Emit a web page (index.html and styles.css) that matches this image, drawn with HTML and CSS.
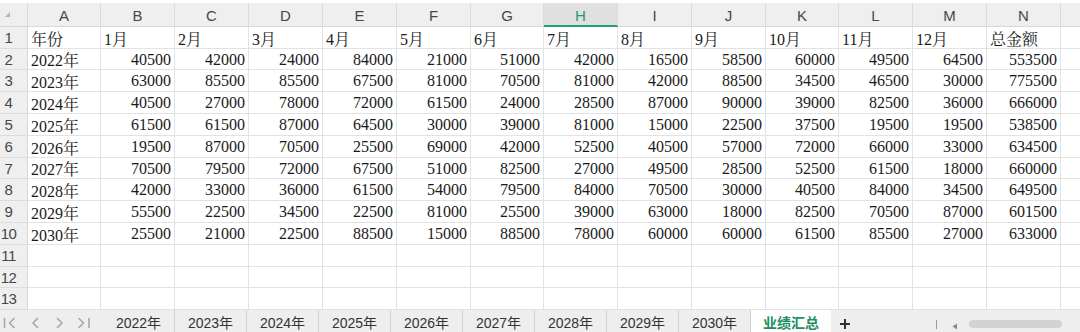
FILE: index.html
```html
<!DOCTYPE html>
<html lang="zh">
<head>
<meta charset="utf-8">
<title>业绩汇总</title>
<link rel="stylesheet" href="styles.css">
</head>
<body>
<div class="sheet">
  <div class="grid">
    <div class="corner"><svg width="28" height="24" viewBox="0 0 28 24"><polygon points="10,9 10,14 5,14" fill="#b5b5b5"/></svg></div>
    <div class="ch">A</div><div class="ch">B</div><div class="ch">C</div><div class="ch">D</div><div class="ch">E</div><div class="ch">F</div><div class="ch">G</div><div class="ch sel">H</div><div class="ch">I</div><div class="ch">J</div><div class="ch">K</div><div class="ch">L</div><div class="ch">M</div><div class="ch">N</div><div class="ch last"></div>

    <div class="rh">1</div><div class="c">年份</div><div class="c">1月</div><div class="c">2月</div><div class="c">3月</div><div class="c">4月</div><div class="c">5月</div><div class="c">6月</div><div class="c">7月</div><div class="c">8月</div><div class="c">9月</div><div class="c">10月</div><div class="c">11月</div><div class="c">12月</div><div class="c">总金额</div><div class="c last"></div>

    <div class="rh">2</div><div class="c">2022年</div><div class="c n">40500</div><div class="c n">42000</div><div class="c n">24000</div><div class="c n">84000</div><div class="c n">21000</div><div class="c n">51000</div><div class="c n">42000</div><div class="c n">16500</div><div class="c n">58500</div><div class="c n">60000</div><div class="c n">49500</div><div class="c n">64500</div><div class="c n">553500</div><div class="c last"></div>

    <div class="rh">3</div><div class="c">2023年</div><div class="c n">63000</div><div class="c n">85500</div><div class="c n">85500</div><div class="c n">67500</div><div class="c n">81000</div><div class="c n">70500</div><div class="c n">81000</div><div class="c n">42000</div><div class="c n">88500</div><div class="c n">34500</div><div class="c n">46500</div><div class="c n">30000</div><div class="c n">775500</div><div class="c last"></div>

    <div class="rh">4</div><div class="c">2024年</div><div class="c n">40500</div><div class="c n">27000</div><div class="c n">78000</div><div class="c n">72000</div><div class="c n">61500</div><div class="c n">24000</div><div class="c n">28500</div><div class="c n">87000</div><div class="c n">90000</div><div class="c n">39000</div><div class="c n">82500</div><div class="c n">36000</div><div class="c n">666000</div><div class="c last"></div>

    <div class="rh">5</div><div class="c">2025年</div><div class="c n">61500</div><div class="c n">61500</div><div class="c n">87000</div><div class="c n">64500</div><div class="c n">30000</div><div class="c n">39000</div><div class="c n">81000</div><div class="c n">15000</div><div class="c n">22500</div><div class="c n">37500</div><div class="c n">19500</div><div class="c n">19500</div><div class="c n">538500</div><div class="c last"></div>

    <div class="rh">6</div><div class="c">2026年</div><div class="c n">19500</div><div class="c n">87000</div><div class="c n">70500</div><div class="c n">25500</div><div class="c n">69000</div><div class="c n">42000</div><div class="c n">52500</div><div class="c n">40500</div><div class="c n">57000</div><div class="c n">72000</div><div class="c n">66000</div><div class="c n">33000</div><div class="c n">634500</div><div class="c last"></div>

    <div class="rh">7</div><div class="c">2027年</div><div class="c n">70500</div><div class="c n">79500</div><div class="c n">72000</div><div class="c n">67500</div><div class="c n">51000</div><div class="c n">82500</div><div class="c n">27000</div><div class="c n">49500</div><div class="c n">28500</div><div class="c n">52500</div><div class="c n">61500</div><div class="c n">18000</div><div class="c n">660000</div><div class="c last"></div>

    <div class="rh">8</div><div class="c">2028年</div><div class="c n">42000</div><div class="c n">33000</div><div class="c n">36000</div><div class="c n">61500</div><div class="c n">54000</div><div class="c n">79500</div><div class="c n">84000</div><div class="c n">70500</div><div class="c n">30000</div><div class="c n">40500</div><div class="c n">84000</div><div class="c n">34500</div><div class="c n">649500</div><div class="c last"></div>

    <div class="rh">9</div><div class="c">2029年</div><div class="c n">55500</div><div class="c n">22500</div><div class="c n">34500</div><div class="c n">22500</div><div class="c n">81000</div><div class="c n">25500</div><div class="c n">39000</div><div class="c n">63000</div><div class="c n">18000</div><div class="c n">82500</div><div class="c n">70500</div><div class="c n">87000</div><div class="c n">601500</div><div class="c last"></div>

    <div class="rh">10</div><div class="c">2030年</div><div class="c n">25500</div><div class="c n">21000</div><div class="c n">22500</div><div class="c n">88500</div><div class="c n">15000</div><div class="c n">88500</div><div class="c n">78000</div><div class="c n">60000</div><div class="c n">60000</div><div class="c n">61500</div><div class="c n">85500</div><div class="c n">27000</div><div class="c n">633000</div><div class="c last"></div>

    <div class="rh">11</div><div class="c"></div><div class="c"></div><div class="c"></div><div class="c"></div><div class="c"></div><div class="c"></div><div class="c"></div><div class="c"></div><div class="c"></div><div class="c"></div><div class="c"></div><div class="c"></div><div class="c"></div><div class="c"></div><div class="c last"></div>

    <div class="rh">12</div><div class="c"></div><div class="c"></div><div class="c"></div><div class="c"></div><div class="c"></div><div class="c"></div><div class="c"></div><div class="c"></div><div class="c"></div><div class="c"></div><div class="c"></div><div class="c"></div><div class="c"></div><div class="c"></div><div class="c last"></div>

    <div class="rh">13</div><div class="c"></div><div class="c"></div><div class="c"></div><div class="c"></div><div class="c"></div><div class="c"></div><div class="c"></div><div class="c"></div><div class="c"></div><div class="c"></div><div class="c"></div><div class="c"></div><div class="c"></div><div class="c"></div><div class="c last"></div>
  </div>

  <div class="tabbar">
    <div class="nav">
      <svg width="103" height="22" viewBox="0 0 103 22" fill="none" stroke="#a8a8a8" stroke-width="1.6" stroke-linecap="round" stroke-linejoin="round">
        <line x1="4.5" y1="8.5" x2="4.5" y2="17.5"/>
        <polyline points="14,8.5 9.5,13 14,17.5"/>
        <polyline points="37.5,8.5 33,13 37.5,17.5"/>
        <polyline points="57.5,8.5 62,13 57.5,17.5"/>
        <polyline points="79,8.5 83.5,13 79,17.5"/>
        <line x1="89" y1="8.5" x2="89" y2="17.5"/>
      </svg>
    </div>
    <div class="tab">2022年</div>
    <div class="tab">2023年</div>
    <div class="tab">2024年</div>
    <div class="tab">2025年</div>
    <div class="tab">2026年</div>
    <div class="tab">2027年</div>
    <div class="tab">2028年</div>
    <div class="tab">2029年</div>
    <div class="tab">2030年</div>
    <div class="tab active">业绩汇总</div>
    <div class="add">
      <svg width="28" height="22" viewBox="0 0 28 22" stroke="#333" stroke-width="2"><line x1="14" y1="9" x2="14" y2="19"/><line x1="9" y1="14" x2="19" y2="14"/></svg>
    </div>
    <div class="spacer"></div>
    <div class="hscroll">
      <span class="vsep"></span>
      <svg class="larrow" width="8" height="22" viewBox="0 0 8 22"><polygon points="6,10.5 6,16.5 1.5,13.5" fill="#888"/></svg>
      <span class="thumb"></span>
    </div>
  </div>
</div>
</body>
</html>
```

FILE: styles.css
```css
* { box-sizing: border-box; }
html, body {
  margin: 0;
  padding: 0;
  background: #ffffff;
  width: 1080px;
  height: 332px;
  overflow: hidden;
}
.sheet {
  padding-top: 3px;
  display: flex;
  flex-direction: column;
}
.grid {
  display: grid;
  grid-template-columns: 28px 73px 74px 74px 74px 74px 74px 73px 74px 74px 74px 73px 74px 74px 74px 1fr;
  grid-template-rows: 24px 22px 21px 22px 22px 22px 22px 21px 22px 22px 22px 22px 21px 22px;
}
.corner {
  background: #efefef;
  border-right: 1px solid #d8d8d8;
  border-bottom: 1px solid #d8d8d8;
  overflow: hidden;
}
.corner svg { display: block; }
.ch {
  background: #efefef;
  border-right: 1px solid #dcdcdc;
  border-bottom: 1px solid #d8d8d8;
  font-family: "Liberation Sans", "Noto Sans", sans-serif;
  font-size: 15px;
  color: #474747;
  display: flex;
  align-items: center;
  justify-content: center;
  padding-top: 1px;
}
.ch.sel {
  background: #e0e0e0;
  color: #1e9a68;
  border-bottom: 2px solid #22a06b;
  padding-top: 2px;
}
.ch.last { border-right: none; }
.rh {
  background: #efefef;
  border-right: 1px solid #d8d8d8;
  border-bottom: 1px solid #dcdcdc;
  font-family: "Liberation Sans", "Noto Sans", sans-serif;
  font-size: 15px;
  color: #474747;
  display: flex;
  align-items: center;
  justify-content: center;
  padding-right: 10px;
  letter-spacing: -0.5px;
}
.c {
  border-right: 1px solid #e2e2e2;
  border-bottom: 1px solid #e2e2e2;
  font-family: "Liberation Serif", "Noto Serif CJK SC", "Noto Sans CJK SC", serif;
  font-size: 16px;
  color: #1a1a1a;
  display: flex;
  align-items: center;
  padding: 1px 3px 0 3px;
  white-space: nowrap;
  overflow: hidden;
}
.c.n { justify-content: flex-end; }
.c.last { border-right: none; }

.tabbar {
  height: 22px;
  background: #eeeeee;
  display: flex;
  align-items: stretch;
  overflow: hidden;
}
.nav { width: 103px; flex: none; }
.nav svg { display: block; }
.tab {
  width: 72px;
  flex: none;
  border-right: 1px solid #cfcfcf;
  font-family: "Liberation Sans", "Noto Sans CJK SC", sans-serif;
  font-size: 14px;
  color: #333333;
  text-align: center;
  padding-top: 4px;
  line-height: 18px;
  white-space: nowrap;
}
.tab.active {
  width: 80px;
  background: #ffffff;
  border-right: none;
  color: #1c8f5f;
  font-weight: bold;
  font-family: "Noto Sans CJK SC", sans-serif;
  padding-top: 3px;
}
.add { width: 28px; flex: none; }
.add svg { display: block; }
.spacer { flex: 1; }
.hscroll {
  display: flex;
  align-items: center;
  width: 145px;
  flex: none;
  padding-top: 6px;
}
.vsep {
  width: 1px;
  height: 9px;
  background: #9a9a9a;
  margin-left: 1px;
}
.larrow { display: block; margin-left: 14px; }
.thumb {
  width: 93px;
  height: 8px;
  border-radius: 4px;
  background: #d3d3d3;
  margin-left: 10px;
}
```
